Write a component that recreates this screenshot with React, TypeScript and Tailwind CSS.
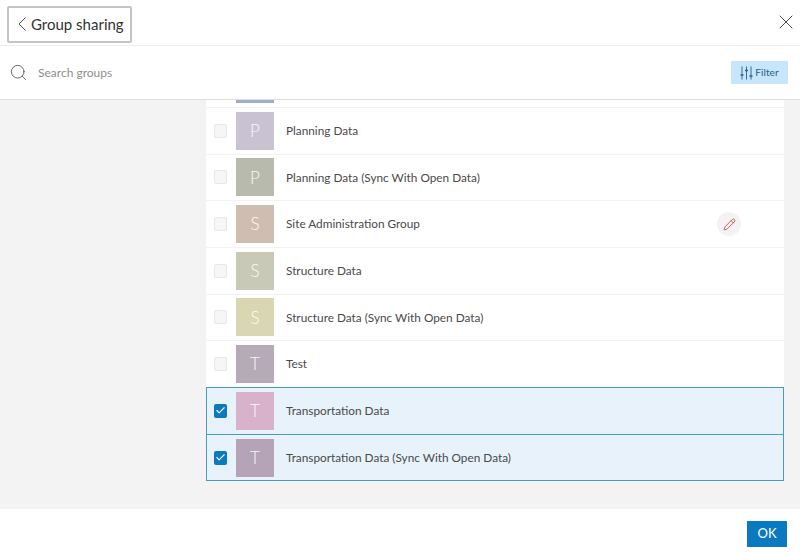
import React from 'react';
import { Search, X, Pencil, Check } from 'lucide-react';

const rows = [
  { letter: 'P', name: 'Planning Data', color: 'bg-[#c8c2d2]' },
  { letter: 'P', name: 'Planning Data (Sync With Open Data)', color: 'bg-[#b9baae]' },
  { letter: 'S', name: 'Site Administration Group', color: 'bg-[#d0bdb2]', edit: true },
  { letter: 'S', name: 'Structure Data', color: 'bg-[#c8c9b6]' },
  { letter: 'S', name: 'Structure Data (Sync With Open Data)', color: 'bg-[#d8d7b2]' },
  { letter: 'T', name: 'Test', color: 'bg-[#b6a9b8]' },
  { letter: 'T', name: 'Transportation Data', color: 'bg-[#d8b1cb]', checked: true },
  { letter: 'T', name: 'Transportation Data (Sync With Open Data)', color: 'bg-[#b5a4b8]', checked: true },
];

const FilterIcon = () => (
  <svg width="13" height="14" viewBox="0 0 13 14" fill="none" stroke="#2b5f85" strokeWidth="0.9">
    <path d="M2 0.5V13.5M6.5 0.5V13.5M11 0.5V13.5" />
    <path d="M0.5 9H3.5M5 4.5H8M9.5 10H12.5" strokeWidth="1.3" />
  </svg>
);

const App = () => {
  return (
    <div className="w-[800px] h-[553px] flex flex-col bg-white overflow-hidden font-['Lato',sans-serif]">
      {/* Header */}
      <div className="h-[46px] shrink-0 flex items-start justify-between border-b border-[#ececec]">
        <button className="ml-[7px] mt-[6px] w-[125px] h-[37px] flex items-center pl-[8px] pb-[1px] border-2 border-[#c4c4c4] rounded-[2px] bg-white">
          <svg width="10" height="16" viewBox="0 0 10 16" fill="none" stroke="#444" strokeWidth="0.9" className="shrink-0">
            <path d="M8.5 1.5L2 8L8.5 14.5" />
          </svg>
          <span className="ml-[4px] text-[15px] text-[#333] whitespace-nowrap">Group sharing</span>
        </button>
        <X size={24} strokeWidth={0.9} className="text-[#333] mt-[10px] mr-[2px]" />
      </div>

      {/* Search */}
      <div className="h-[54px] shrink-0 flex items-center justify-between border-b border-[#dedede] pl-[9px] pr-[12px]">
        <div className="flex items-center">
          <Search size={19} strokeWidth={1} className="text-[#444]" />
          <span className="ml-[10px] text-[12px] text-[#8e8e8e]">Search groups</span>
        </div>
        <button className="w-[57px] h-[23px] flex items-center justify-center gap-[2px] bg-[#c7e6fb] text-[10.2px] text-[#2b5f85]">
          <FilterIcon />
          Filter
        </button>
      </div>

      {/* List */}
      <div className="flex-1 bg-[#f3f3f3] pl-[206px] pr-[16px]">
        <div className="bg-white">
          <div className="h-[7.9px] pl-[30px] border-b border-[#f3f3f3]">
            <div className="w-[38px] h-[3px] bg-[#a3adcb]" />
          </div>
          {rows.map((row) => (
            <div
              key={row.name}
              className={`flex items-center border-b ${
                row.checked
                  ? 'bg-[#e8f2fb] border border-[#4b9ac4] mt-[-1px] h-[47.7px] pl-[7px]'
                  : 'h-[46.7px] pl-[8px] border-[#f3f3f3]'
              }`}
            >
              <div
                className={`w-[13px] h-[14px] shrink-0 rounded-[2px] flex items-center justify-center ${
                  row.checked ? 'bg-[#0a79bf]' : 'bg-[#f6f6f6] border border-[#e8e8e8]'
                }`}
              >
                {row.checked && <Check size={11} strokeWidth={2.5} className="text-white" />}
              </div>
              <div className={`w-[38px] h-[38px] shrink-0 ml-[9px] flex items-center justify-center text-[17px] font-light text-white/90 ${row.color}`}>
                {row.letter}
              </div>
              <span className="ml-[12px] text-[11.8px] text-[#4a4a4a] whitespace-nowrap">{row.name}</span>
              {row.edit && (
                <div className="ml-auto mr-[43px] w-[24px] h-[24px] rounded-full bg-[#f3f3f3] flex items-center justify-center">
                  <Pencil size={13} strokeWidth={1.5} className="text-[#b5483a]" />
                </div>
              )}
            </div>
          ))}
        </div>
      </div>

      {/* Footer */}
      <div className="h-[44px] shrink-0 flex items-start justify-end pr-[13px] pt-[12px]">
        <button className="w-[40px] h-[26px] bg-[#0a79bf] text-white text-[13px]">OK</button>
      </div>
    </div>
  );
};

export default App;
